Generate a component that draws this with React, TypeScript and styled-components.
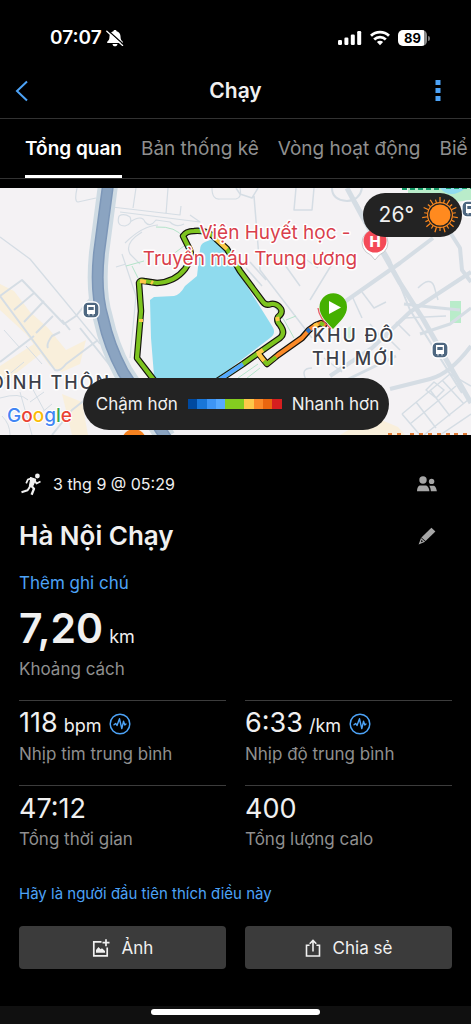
import React from "react";
import styled, { createGlobalStyle } from "styled-components";

const blue = "#4da3f7";

const GlobalStyle = createGlobalStyle`
  *, *::before, *::after { box-sizing: border-box; }
  html, body { margin: 0; padding: 0; background: #000; }
  body { font-family: Inter, "Liberation Sans", sans-serif; color: #f0f0f0; }
  button { font: inherit; color: inherit; background: none; border: 0; padding: 0; cursor: pointer; }
  svg { display: block; flex: none; }
`;

const Page = styled.div`
  display: flex;
  flex-direction: column;
  min-height: 100vh;
  overflow: hidden;
  background: #000;
`;

const StatusBar = styled.div`
  display: flex;
  align-items: center;
  justify-content: space-between;
  height: 64px;
  padding: 12px 41px 0 50px;
`;

const StatusGroup = styled.div<{ $gap: number }>`
  display: flex;
  align-items: center;
  gap: ${(p) => p.$gap}px;
`;

const Clock = styled.span`
  font-size: 19px;
  line-height: 24px;
  font-weight: 600;
  color: #fff;
`;

const Battery = styled.span`
  display: flex;
  align-items: center;
  justify-content: center;
  width: 29px;
  height: 16px;
  border-radius: 5px;
  background: linear-gradient(to right, #fff 26px, #8a8a8a 26px);
  color: #000;
  font-size: 13px;
  line-height: 16px;
  font-weight: 700;
`;

const BatteryBox = styled.span`
  display: flex;
  align-items: center;
  gap: 1px;
`;

const BatteryTip = styled.span`
  width: 2px;
  height: 5px;
  border-radius: 0 2px 2px 0;
  background: #777;
`;

const NavBar = styled.header`
  display: grid;
  grid-template-columns: 44px 1fr 44px;
  align-items: center;
  height: 55px;
  padding: 0 11px 0 0;
  border-bottom: 1px solid #323232;
`;

const NavButton = styled.button`
  display: flex;
  align-items: center;
  justify-content: center;
  height: 44px;
`;

const NavTitle = styled.h1`
  margin: 0;
  padding-left: 11px;
  text-align: center;
  font-size: 21px;
  line-height: 28px;
  font-weight: 600;
`;

const Tabs = styled.nav`
  display: flex;
  gap: 19px;
  height: 60px;
  padding-left: 25px;
  overflow: hidden;
  border-bottom: 1px solid #323232;
`;

const Tab = styled.button<{ $active?: boolean }>`
  flex: none;
  height: 59px;
  border-bottom: 3px solid ${(p) => (p.$active ? "#fff" : "transparent")};
  padding-top: 4px;
  font-size: 19px;
  line-height: 28px;
  font-weight: ${(p) => (p.$active ? 600 : 400)};
  color: ${(p) => (p.$active ? "#fff" : "#8f8f8f")};
  white-space: nowrap;
`;

const MapArea = styled.section`
  position: relative;
  height: 247px;
  margin-top: 9px;
  overflow: hidden;
  background: #f4f2f4;
`;

const MapSvg = styled.svg`
  width: 100%;
  height: 100%;
  font-family: Inter, "Liberation Sans", sans-serif;
`;

const Weather = styled.div`
  position: absolute;
  top: 5px;
  right: 9px;
  display: flex;
  align-items: center;
  gap: 7px;
  height: 44px;
  padding: 0 3px 0 16px;
  border-radius: 22px;
  background: #232323;
  font-size: 21px;
  line-height: 28px;
`;

const Legend = styled.div`
  position: absolute;
  bottom: 5px;
  left: 50%;
  transform: translateX(-50%);
  display: flex;
  align-items: center;
  justify-content: center;
  gap: 10px;
  width: 306px;
  height: 52px;
  padding-left: 4px;
  border-radius: 26px;
  background: #232323;
  font-size: 17px;
  line-height: 24px;
  white-space: nowrap;
`;

const Scale = styled.div`
  display: flex;
  width: 94px;
  height: 10px;
`;

const Swatch = styled.span<{ $color: string }>`
  flex: 1;
  background: ${(p) => p.$color};
`;

const Content = styled.main`
  padding: 35px 19px 0;
`;

const Row = styled.div<{ $height: number }>`
  display: flex;
  align-items: center;
  justify-content: space-between;
  height: ${(p) => p.$height}px;
`;

const DateLine = styled.div`
  display: flex;
  align-items: center;
  gap: 8px;
  font-size: 16px;
  line-height: 24px;
`;

const IconButton = styled.button`
  display: flex;
  align-items: center;
  justify-content: center;
  width: 24px;
  height: 24px;
  margin-right: 13px;
`;

const Title = styled.h2`
  margin: 0;
  font-size: 26px;
  line-height: 36px;
  font-weight: 600;
`;

const TextLink = styled.a<{ $size: number }>`
  display: block;
  width: fit-content;
  font-size: ${(p) => p.$size}px;
  line-height: 20px;
  color: ${blue};
  text-decoration: none;
`;

const Distance = styled.div`
  margin-top: 15px;
  font-size: 41px;
  line-height: 40px;
  font-weight: 600;
`;

const Unit = styled.span`
  margin-left: 6px;
  font-size: 18px;
  font-weight: 400;
`;

const Label = styled.div`
  font-size: 17px;
  line-height: 24px;
  color: #8f8f8f;
`;

const Stats = styled.div`
  display: grid;
  grid-template-columns: 1fr 1fr;
  column-gap: 19px;
  margin-top: 19px;
  margin-bottom: 14px;
`;

const Stat = styled.div`
  height: 85px;
  padding-top: 5px;
  border-top: 1px solid #3c3c3c;
`;

const StatValue = styled.div`
  display: flex;
  align-items: center;
  gap: 8px;
  height: 36px;
  font-size: 27px;
  line-height: 36px;
`;

const Actions = styled.div`
  display: grid;
  grid-template-columns: 1fr 1fr;
  gap: 19px;
  margin-top: 22px;
`;

const Action = styled.button`
  display: flex;
  align-items: center;
  justify-content: center;
  gap: 12px;
  height: 43px;
  border-radius: 4px;
  background: #3b3b3b;
  font-size: 17px;
  line-height: 24px;
`;

const BottomBar = styled.footer`
  display: flex;
  justify-content: center;
  height: 18px;
  margin-top: auto;
  padding-top: 3px;
  background: #101010;
`;

const HomeIndicator = styled.div`
  width: 169px;
  height: 6px;
  border-radius: 3px;
  background: #fff;
`;

const BellOff = () => (
  <svg width="18" height="18" viewBox="0 0 18 18">
    <path d="M9 1c.9 0 1.500.5 1.600 1.200C13.200 3 14.500 5 14.500 7.200c0 3 .8 4.300 2.300 5.600v1.200H1.200v-1.200C2.700 11.500 3.500 10.200 3.500 7.200 3.500 5 4.800 3 7.400 2.200 7.500 1.500 8.100 1 9 1z" fill="#fff" />
    <path d="M6.500 15h5c-.2 1.400-1.200 2.300-2.500 2.300s-2.300-.9-2.500-2.300z" fill="#fff" />
    <path d="M2 1.500l15 13.500" stroke="#000" strokeWidth="1.400" />
    <path d="M.8 2.200l15.800 14.200" stroke="#fff" strokeWidth="1.300" strokeLinecap="round" />
  </svg>
);

const Signal = () => (
  <svg width="24" height="16" viewBox="0 0 24 16" fill="#fff">
    <rect x="0" y="10" width="4" height="5" rx="1.200" />
    <rect x="6.400" y="7.500" width="4" height="7.500" rx="1.200" />
    <rect x="12.800" y="4.500" width="4" height="10.500" rx="1.200" />
    <rect x="19.200" y="1" width="4" height="14" rx="1.200" />
  </svg>
);

const Wifi = () => (
  <svg width="20" height="16" viewBox="0 0 20 16" fill="none" stroke="#fff" strokeWidth="2.800">
    <path d="M1 5.800a13 13 0 0 1 18 0" />
    <path d="M4.200 9.400a8.300 8.300 0 0 1 11.600 0" />
    <path d="M10 15.200L6.900 12a4.400 4.400 0 0 1 6.200 0z" fill="#fff" stroke="none" />
  </svg>
);

const Sun = () => {
  const rays = Array.from({ length: 22 }, (_, i) => (i * 360) / 22);
  return (
    <svg width="38" height="38" viewBox="0 0 38 38" stroke="#ff8a1f">
      <circle cx="19" cy="19" r="10.500" fill="#ff8a1f" stroke="none" />
      <circle cx="19" cy="19" r="12.400" fill="none" strokeWidth="1.100" />
      {rays.map((a, i) => (
        <path key={a} d={i % 2 ? "M19 6.500V3" : "M19 6.500V1"} strokeWidth="1.200" transform={`rotate(${a} 19 19)`} />
      ))}
    </svg>
  );
};

const Runner = () => (
  <svg width="26" height="24" viewBox="0 0 26 24" fill="none" stroke="#f0f0f0" strokeLinejoin="round">
    <circle cx="18.400" cy="4" r="2.400" fill="#f0f0f0" stroke="none" />
    <path d="M11.500 5.600L16.600 7.400L13.800 13.800L10.400 14.200L11.600 8z" fill="#f0f0f0" strokeWidth="1.200" />
    <path d="M12.400 6.200L8.800 7.600L7.200 11.400" strokeWidth="1.700" />
    <path d="M15.600 8.200L17.500 11.500L21.500 9.400" strokeWidth="1.700" />
    <path d="M12 13.500L15 16.800L12.600 22.800" strokeWidth="2.300" />
    <path d="M11.400 14L8.600 18.200L2.500 20.300" strokeWidth="2" />
  </svg>
);

const People = () => (
  <svg width="22" height="18" viewBox="0 0 22 18" fill="#a6a6a6">
    <circle cx="7" cy="5" r="3.700" />
    <path d="M1 16.200c.2-3 1-5.600 3.400-5.600h5c2.400 0 3.600 2.600 4 5.600z" />
    <circle cx="15.600" cy="6.400" r="2.700" />
    <path d="M13.200 10.800h4.200c2 0 3 2.700 3.500 5.400h-6c-.3-2.400-.7-4.200-1.700-5.400z" />
  </svg>
);

const Pencil = () => (
  <svg width="18" height="18" viewBox="0 0 18 18" fill="#a6a6a6">
    <path d="M13.400 .8L17.400 4.600L7.600 14L3.400 10.400z" />
    <path d="M3 11L7.200 14.800L.6 17.400zM3.600 12.800L2.900 15.200L5 14.600z" fillRule="evenodd" />
  </svg>
);

const Pulse = () => (
  <svg width="22" height="22" viewBox="0 0 22 22" fill="none" stroke={blue} strokeLinejoin="round" strokeLinecap="round">
    <circle cx="11" cy="11" r="9.800" strokeWidth="1.500" />
    <path d="M5 11.800L6.600 10.500L8 12.400L10.500 5.700L11.700 11L12.800 15.600L14.500 8.300L15.800 12L17 11" strokeWidth="1.400" />
  </svg>
);

const PhotoAdd = () => (
  <svg width="18" height="18" viewBox="0 0 18 18" fill="none" stroke="#f0f0f0">
    <path d="M9.500 2.800H1.800V16.800H15.200V8.400" strokeWidth="1.700" />
    <path d="M14 .2V7.200M10.500 3.700H17.500" strokeWidth="1.700" />
    <path d="M4 13.800V11L6.500 8L8.600 10.300L10 9.200L13 12V13.800z" fill="#f0f0f0" stroke="none" />
  </svg>
);

const Share = () => (
  <svg width="16" height="18" viewBox="0 0 16 18" fill="none" stroke="#f0f0f0" strokeWidth="1.600">
    <path d="M4.600 6.300H1.500V17H14.500V6.300H11.400" />
    <path d="M8 12.500V1.800M4.700 4.800L8 1.500L11.300 4.800" />
  </svg>
);

const river = "M108 -3L99 65Q95 104 103 130Q109 158 123 184L166 250";
const route = "M324 137L321 135L316 137L309 142L302 150L278 167L267 176L258 165";
const loop =
  "M157 196L137 170L141 123L139 95Q140 92 144 93L157 95Q175 94 185 81Q193 70 190 62L183 48Q186 43 194 43Q206 42 213 48L227 61L240 83L263 114Q266 118 271 116Q277 115 281 121Q283 125 278 129Q276 133 280 137Q286 145 280 150L257 166L243 176L225 188L205 201";

const RouteMap = () => (
  <MapSvg viewBox="0 0 471 247" preserveAspectRatio="xMidYMid slice" role="img" aria-label="Bản đồ">
    <rect width="471" height="247" fill="#f4f2f4" />
    <g fill="#f9efdb">
      <path d="M0 96L14 103L30 124L48 140L66 162L86 152L80 176L62 184L50 178L26 146L0 122z" />
      <path d="M0 178L40 152L48 160L0 198z" />
      <path d="M62 206L82 214L88 247H72z" />
      <path d="M340 247L372 228L398 239L405 247z" />
    </g>
    <g fill="#b9ecca">
      <rect x="450" y="113" width="11" height="22" />
      <path d="M408 0H471V12L455 14L440 8L430 12L408 6z" />
      <path d="M344 142L351 138L353 148L347 153z" opacity=".6" />
    </g>
    <path d="M440 0Q450 12 466 0z" fill="#8fdcf0" />
    <g fill="none" stroke="#d5dde4" strokeWidth="1.500" strokeLinejoin="round">
      <path d="M0 49L30 71L64 112L100 156" strokeWidth="1.300" />
      <path d="M0 108L22 92L64 136L76 128L92 108M14 122L34 105M24 134L44 113M36 145L53 128M62 132L70 142M0 108L55 182Q60 184 66 176L98 152M0 174L34 148M48 160Q46 156 52 148L60 144M80 140L112 180M52 247L72 222L100 200" strokeWidth="2" />
      <path d="M4 142L20 160M26 158L42 176M0 194L24 174M30 196L44 222M20 204L32 247M44 204L30 214M2 228Q10 236 10 247M40 226L52 216M0 210Q20 204 28 212" strokeWidth="1" />
      <path d="M77 0Q74 14 78 14L96 10M112 19L180 27L181 18M136 0L133 20M168 0L166 26M120 24L200 34L190 27M212 0Q212 12 220 11H236Q242 10 240 0" strokeWidth="1.200" />
      <path d="M140 76L130 66Q124 55 142 44M125 55Q142 38 158 37M122 66L136 108L130 170M116 79L126 76M119 28Q116 38 125 38Q133 36 130 29Q124 25 119 28M130 34Q142 26 145 34Q150 40 156 32L170 34Q176 40 184 36" strokeWidth="1.200" />
      <path d="M296 0L294 22H312L314 0M236 0L240 6L252 10L258 0M254 8L260 82L312 150M280 70L300 98M246 80L262 98M250 74L266 92M332 76L310 112M304 70L318 80" />
      <path d="M347 0L362 28L400 95L423 131L471 215" strokeWidth="5" />
      <path d="M332 0Q332 12 347 13Q360 12 362 0M356 14L390 72L410 122L462 205" strokeWidth="2" />
      <path d="M343 115L400 75L433 50M471 84L410 124L372 160L330 188M446 38L460 60L462 82L471 94M471 158Q450 186 430 191L390 201" strokeWidth="4" />
      <path d="M396 168L330 200M404 116L430 119L460 122M471 120L450 136L420 146" strokeWidth="3" />
      <path d="M362 104L374 120L386 114M352 108L362 130M418 100Q430 88 434 98L438 112M404 130L446 128M396 134L410 148M386 148L400 162" />
      <path d="M402 226L450 186L471 198M402 226L420 247M416 214L436 240M430 202L450 228M442 192L464 216M410 236L456 198M424 247L468 212M440 247L471 226M426 202L434 194L444 202L436 210zM306 192Q300 180 312 180M324 170L342 184M370 136L382 150" />
    </g>
    <path d={river} fill="none" stroke="#cfdbe3" strokeWidth="20" />
    <path d={river} fill="none" stroke="#7d97b8" strokeWidth="12" />
    <path d={river} fill="none" stroke="#8ba4c1" strokeWidth="9" />
    <g fill="none" stroke="#b4e4ca" strokeWidth="1">
      <path d="M156 39Q176 38 184 50M188 55L168 70M132 78L138 90M126 78L144 73M238 190L258 176M242 194L260 180M274 118L284 132L294 150M286 132L296 128" />
    </g>
    <path d="M205 54Q200 56 200 62L197 88L185 98Q180 107 174 108L154 109L150 112L151 150L155 200H205L270 150Q277 145 272 138L262 122L222 58L215 50z" fill="#8fdbee" />
    <g fill="none" strokeLinejoin="round" strokeLinecap="round">
      <path d={route} stroke="#15140e" strokeWidth="6.500" />
      <path d={loop} stroke="#15140e" strokeWidth="6.500" />
      <path d={route} stroke="#fb8a28" strokeWidth="4" />
      <path d={loop} stroke="#7dc41f" strokeWidth="4.200" />
      <g strokeLinecap="butt" strokeWidth="4">
        <path d="M213 48L227 61M258 165L264 173M257 166L263 162M140 93L146 94M151 94L153 95M141 131V134M278 133L277 129M318 136L314 138" stroke="#fdc849" />
        <path d="M264 173L267 176L276 169M320 135L324 137" stroke="#7dc41f" />
        <path d="M310 141L307 144" stroke="#2b6fc0" />
        <path d="M243 176L225 188L205 201" stroke="#56a9ff" />
      </g>
    </g>
    <g textAnchor="middle" fontSize="19" fill="#d93f4c" stroke="#fff" strokeWidth="3" strokeLinejoin="round" paintOrder="stroke">
      <text x="275" y="51">Viện Huyết học -</text>
      <text x="250" y="77">Truyền máu Trung ương</text>
    </g>
    <path d="M375 72Q371 66 366 64A13 13 0 1 1 384 64Q379 66 375 72z" fill="#fff" stroke="#c9c9cc" strokeWidth="1" />
    <circle cx="375" cy="53" r="11.500" fill="#f44a57" />
    <text x="375" y="59" textAnchor="middle" fontSize="15" fontWeight="800" fill="#fff">H</text>
    <g textAnchor="middle" fontSize="18" fontWeight="500" fill="#3c4048" stroke="#fff" strokeWidth="3" strokeLinejoin="round" paintOrder="stroke" letterSpacing="2">
      <text x="354" y="154">KHU ĐÔ</text>
      <text x="354" y="177">THỊ MỚI</text>
      <text x="51" y="201">ĐÌNH THÔN</text>
    </g>
    <path d="M318 120Q319 130 331 141" stroke="#e85c64" strokeWidth="1.300" fill="none" />
    <path d="M333 141C326 133 319.500 128 319.500 119A13.500 13.500 0 0 1 347 119C347 128 340 133 333 141z" fill="#45b000" />
    <path d="M329 113V126L341 119.500z" fill="#fff" />
    {[[91, 122], [440, 162], [470, 21]].map(([x, y]) => (
      <g key={x} transform={`translate(${x} ${y})`}>
        <rect x="-8" y="-8" width="16" height="16" rx="5" fill="#4e6780" stroke="#fff" strokeWidth="1.300" />
        <path d="M-4 -5H4V4H2.500V5.500H1.500V4H-1.500V5.500H-2.500V4H-4z" fill="#fff" />
        <path d="M-2.700 -3H2.700V0H-2.700z" fill="#4e6780" />
      </g>
    ))}
    <circle cx="134" cy="253" r="12" fill="#f58220" />
    <path d="M402 1H440M446 0H471" stroke="#169a68" strokeWidth="2" strokeDasharray="5 3" />
    <path d="M388 246H402M410 246H450M454 246H471" stroke="#e07a35" strokeWidth="2" strokeDasharray="4 5" />
    <text x="7" y="234" fontSize="19" fontWeight="500" stroke="#fff" strokeWidth="2" paintOrder="stroke" aria-label="Google">
      <tspan fill="#4285f4">G</tspan>
      <tspan fill="#ea4335">o</tspan>
      <tspan fill="#fbbc05">o</tspan>
      <tspan fill="#4285f4">g</tspan>
      <tspan fill="#34a853">l</tspan>
      <tspan fill="#ea4335">e</tspan>
    </text>
  </MapSvg>
);

const paceColors = ["#00499f", "#1976d8", "#3d95f5", "#56a9ff", "#84cc20", "#84cc20", "#fdc849", "#fb8a28", "#ea660f", "#d51f1f"];

const stats = [
  { value: "118", unit: "bpm", label: "Nhịp tim trung bình", pulse: true },
  { value: "6:33", unit: "/km", label: "Nhịp độ trung bình", pulse: true },
  { value: "47:12", label: "Tổng thời gian" },
  { value: "400", label: "Tổng lượng calo" },
];

export default function App() {
  return (
    <>
      <GlobalStyle />
      <Page>
        <StatusBar>
          <StatusGroup $gap={4}>
            <Clock>07:07</Clock>
            <BellOff />
          </StatusGroup>
          <StatusGroup $gap={8}>
            <Signal />
            <Wifi />
            <BatteryBox>
              <Battery>89</Battery>
              <BatteryTip />
            </BatteryBox>
          </StatusGroup>
        </StatusBar>
        <NavBar>
          <NavButton aria-label="Quay lại">
            <svg width="14" height="22" viewBox="0 0 14 22" fill="none" stroke={blue} strokeWidth="2">
              <path d="M12 1.500L2 11L12 20.500" />
            </svg>
          </NavButton>
          <NavTitle>Chạy</NavTitle>
          <NavButton aria-label="Thêm">
            <svg width="6" height="22" viewBox="0 0 6 22" fill={blue}>
              <path d="M.5 0h5v5h-5zM.5 8h5v5h-5zM.5 16h5v5h-5z" />
            </svg>
          </NavButton>
        </NavBar>
        <Tabs>
          <Tab $active>Tổng quan</Tab>
          <Tab>Bản thống kê</Tab>
          <Tab>Vòng hoạt động</Tab>
          <Tab>Biể</Tab>
        </Tabs>
        <MapArea>
          <RouteMap />
          <Weather>
            <span>26°</span>
            <Sun />
          </Weather>
          <Legend>
            <span>Chậm hơn</span>
            <Scale>
              {paceColors.map((c, i) => (
                <Swatch key={i} $color={c} />
              ))}
            </Scale>
            <span>Nhanh hơn</span>
          </Legend>
        </MapArea>
        <Content>
          <Row $height={28}>
            <DateLine>
              <Runner />
              <span>3 thg 9 @ 05:29</span>
            </DateLine>
            <IconButton aria-label="Người xem">
              <People />
            </IconButton>
          </Row>
          <Row $height={75}>
            <Title>Hà Nội Chạy</Title>
            <IconButton aria-label="Chỉnh sửa">
              <Pencil />
            </IconButton>
          </Row>
          <TextLink href="#note" $size={17}>Thêm ghi chú</TextLink>
          <Distance>
            7,20
            <Unit>km</Unit>
          </Distance>
          <Label>Khoảng cách</Label>
          <Stats>
            {stats.map((s) => (
              <Stat key={s.label}>
                <StatValue>
                  <span>
                    {s.value}
                    {s.unit && <Unit>{s.unit}</Unit>}
                  </span>
                  {s.pulse && <Pulse />}
                </StatValue>
                <Label>{s.label}</Label>
              </Stat>
            ))}
          </Stats>
          <TextLink href="#like" $size={15}>Hãy là người đầu tiên thích điều này</TextLink>
          <Actions>
            <Action>
              <PhotoAdd />
              Ảnh
            </Action>
            <Action>
              <Share />
              Chia sẻ
            </Action>
          </Actions>
        </Content>
        <BottomBar>
          <HomeIndicator />
        </BottomBar>
      </Page>
    </>
  );
}
